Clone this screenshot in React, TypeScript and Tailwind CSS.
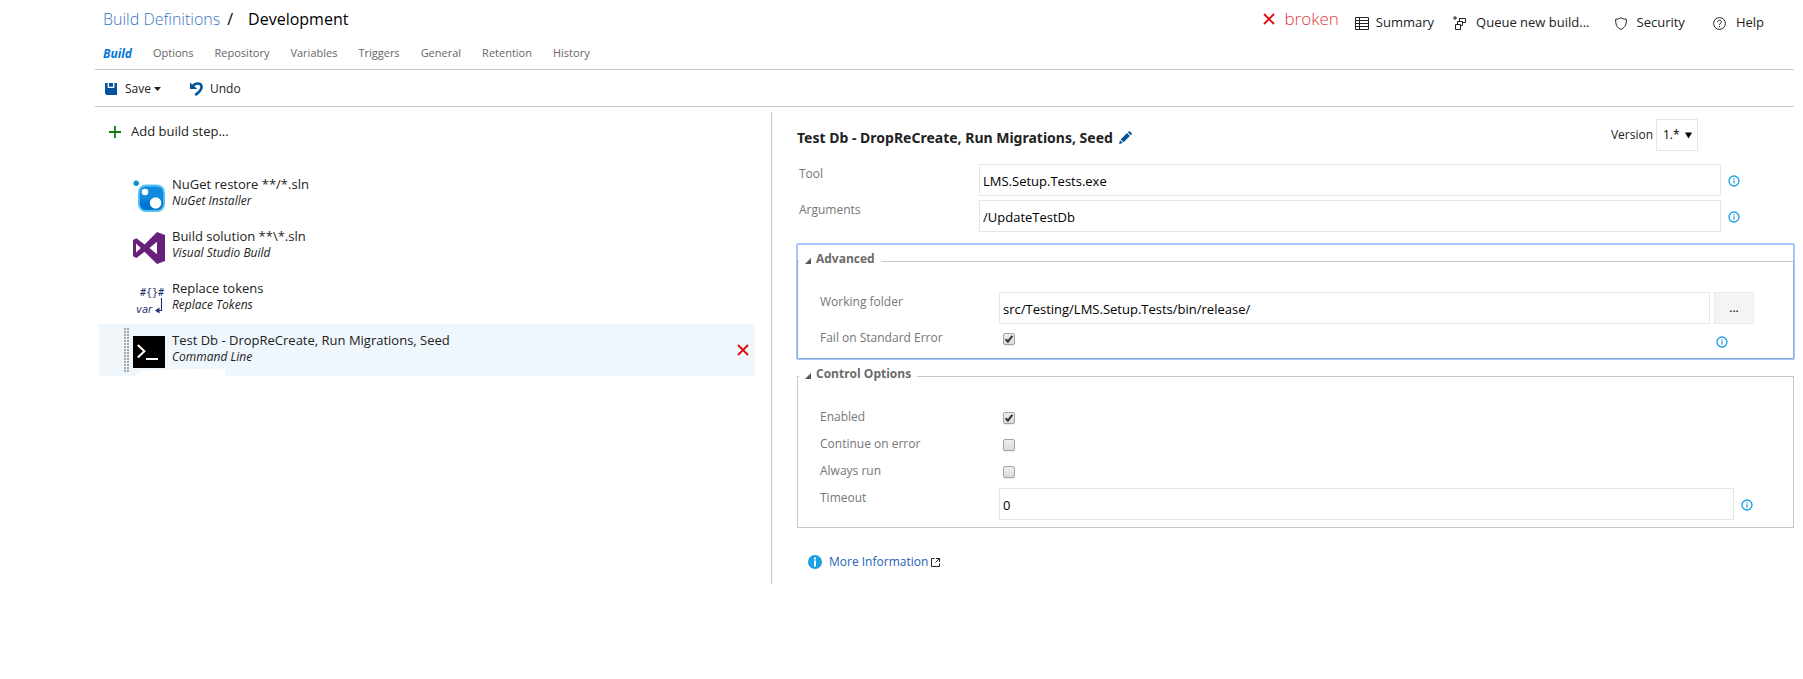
import React, { useState } from "react";

const InfoIcon = () => (
  <svg viewBox="0 0 12 12" className="h-3 w-3 shrink-0" fill="none">
    <circle cx="6" cy="6" r="5" stroke="#1ba1e2" strokeWidth="1.3" />
    <path d="M6 5.3V8.6" stroke="#1ba1e2" strokeWidth="1.2" />
    <path d="M6 3.2V4.4" stroke="#1ba1e2" strokeWidth="1.2" />
  </svg>
);

const CrossIcon = () => (
  <svg viewBox="0 0 12 12" className="h-3 w-3 shrink-0" fill="none" stroke="#e00b0b" strokeWidth="1.9">
    <path d="M1 1L11 11M11 1L1 11" />
  </svg>
);

const NuGetIcon = () => (
  <svg viewBox="0 0 32 32" className="h-8 w-8">
    <defs>
      <linearGradient id="nuget" x1="0" y1="0" x2="0" y2="1">
        <stop offset="0.5" stopColor="#0f8ade" />
        <stop offset="0.75" stopColor="#0072d0" />
      </linearGradient>
    </defs>
    <circle cx="3.2" cy="3.2" r="2.7" fill="#0a94d6" />
    <rect x="5" y="4.5" width="27" height="27.5" rx="8" fill="#56c3ee" />
    <rect x="6.8" y="6.4" width="23.4" height="23.6" rx="6.4" fill="url(#nuget)" />
    <circle cx="12" cy="12" r="3.3" fill="#fff" />
    <circle cx="22.6" cy="23" r="5.8" fill="#fff" />
  </svg>
);

const VisualStudioIcon = () => (
  <svg viewBox="0 0 32 32" className="h-8 w-8" fill="#68217a" fillRule="evenodd">
    <path d="M24 0L32 3V29L24 32L11.6 19.8L3.4 26L0 24.2V8L3.4 6.2L11.6 12.4ZM24 9.8L16.4 16L24 22.2ZM3 11.6V20.6L7.8 16Z" />
  </svg>
);

const TokensIcon = () => (
  <svg viewBox="0 0 32 32" className="h-8 w-8" fill="#1f3270">
    <text x="7" y="12" fontSize="10" fontFamily="DejaVu Sans Mono, monospace">#{"{}"}#</text>
    <text x="3" y="29" fontSize="10" fontStyle="italic" fontFamily="DejaVu Sans, sans-serif">var</text>
    <path d="M28.5 14V26.5H25" fill="none" stroke="#1f3270" strokeWidth="1.1" />
    <path d="M26.5 23.5V29.5L22 26.5Z" />
  </svg>
);

const ConsoleIcon = () => (
  <svg viewBox="0 0 32 32" className="h-8 w-8" fill="none" stroke="#fff">
    <rect width="32" height="32" fill="#000" stroke="none" />
    <path d="M4.8 9L11.4 15.2L4.8 21.4" strokeWidth="2" />
    <path d="M13 23H25" strokeWidth="2" />
  </svg>
);

const tabs = ["Build", "Options", "Repository", "Variables", "Triggers", "General", "Retention", "History"];

const steps = [
  { title: "NuGet restore **/*.sln", task: "NuGet Installer", icon: <NuGetIcon /> },
  { title: "Build solution **\\*.sln", task: "Visual Studio Build", icon: <VisualStudioIcon /> },
  { title: "Replace tokens", task: "Replace Tokens", icon: <TokensIcon /> },
  { title: "Test Db - DropReCreate, Run Migrations, Seed", task: "Command Line", icon: <ConsoleIcon />, selected: true },
];

const inputClass =
  "h-8 min-w-0 flex-1 rounded-none border border-[#e6e6e6] bg-white px-[3px] pt-[2px] text-[13px] text-black outline-none";

function Label({ id, text, width = "w-[179px]" }: { id: string; text: string; width?: string }) {
  return (
    <label htmlFor={id} className={`${width} h-5 shrink-0 self-start text-[12px] leading-5 text-[#767676]`}>
      {text}
    </label>
  );
}

function Checkbox({ id, initial = false }: { id: string; initial?: boolean }) {
  const [checked, setChecked] = useState(initial);
  return (
    <span className="ml-1 grid h-3 w-3 shrink-0">
      <input
        id={id}
        type="checkbox"
        checked={checked}
        onChange={(e) => setChecked(e.target.checked)}
        className="peer col-start-1 row-start-1 h-3 w-3 appearance-none rounded-[2px] border border-[#a3a3a3] bg-linear-to-b from-[#eeeeee] to-[#dcdcdc] shadow-[0_1px_0_#ececec]"
      />
      <svg
        viewBox="0 0 12 12"
        className="pointer-events-none invisible z-10 col-start-1 row-start-1 h-3 w-3 peer-checked:visible"
        fill="none"
        stroke="#3a3a3a"
        strokeWidth="2.2"
      >
        <path d="M2.6 6.2L4.9 8.6L9.3 2.8" />
      </svg>
    </span>
  );
}

function CheckRow({ id, text, initial }: { id: string; text: string; initial?: boolean }) {
  return (
    <div className="flex h-[27px] pl-[22px]">
      <Label id={id} text={text} />
      <div className="pt-[5px]">
        <Checkbox id={id} initial={initial} />
      </div>
    </div>
  );
}

function Legend({ text }: { text: string }) {
  return (
    <legend className="ml-[1px] h-[35px] pr-[6px] pl-[6px]">
      <button type="button" className="flex h-[30px] items-center gap-[5px] text-[12px] font-bold text-[#6b6b6b]">
        <svg viewBox="0 0 6 6" className="mt-[3px] h-[6px] w-[6px]" fill="#555">
          <path d="M6 0V6H0Z" />
        </svg>
        {text}
      </button>
    </legend>
  );
}

function Header() {
  return (
    <header className="flex h-[38px] justify-between">
      <h1 className="flex h-[38px] items-center pl-2 text-[16px] whitespace-nowrap text-black">
        <a href="#definitions" className="font-light text-[#3b74c4]">Build Definitions</a>
        <span className="ml-[7px]">/</span>
        <span className="ml-[15px]">Development</span>
      </h1>
      <nav className="flex h-[38px] items-center pr-[30px] text-[13px] whitespace-nowrap text-[#222]">
        <a href="#status" className="mr-4 flex items-center gap-[10px] text-[17px] font-light text-[#dc3b3b]">
          <CrossIcon />
          broken
        </a>
        <a href="#summary" className="mt-2 mr-[19px] flex items-center gap-[7px]">
          <svg viewBox="0 0 14 13" className="h-[13px] w-[14px]" fill="none" stroke="#222">
            <path d="M.5 .5H13.5V12.5H.5ZM.5 3.5H13.5M.5 6.5H13.5M.5 9.5H13.5M4.5 .5V12.5" />
          </svg>
          Summary
        </a>
        <a href="#queue" className="mt-2 mr-[25px] flex items-center gap-[10px]">
          <svg viewBox="0 0 13 14" className="h-[14px] w-[13px]" fill="none" stroke="#222">
            <path d="M2 0V4M0 2H4M6 2.5H12.5V6.5H9.5M6.5 2V5M4.5 8V5.5H9.5V9.5H7.5M2.5 8.5H7.5V13.5H2.5Z" />
          </svg>
          Queue new build...
        </a>
        <a href="#security" className="mt-2 mr-7 flex items-center gap-[10px]">
          <svg viewBox="0 0 12 13" className="h-[13px] w-3" fill="none" stroke="#222">
            <path d="M6 .6C4.6 1.8 2.6 2.2 .7 2.2C.4 7 1.6 10.5 6 12.4C10.4 10.5 11.6 7 11.3 2.2C9.4 2.2 7.4 1.8 6 .6Z" />
          </svg>
          Security
        </a>
        <a href="#help" className="mt-2 flex items-center gap-[10px]">
          <svg viewBox="0 0 13 13" className="h-[13px] w-[13px]" fill="none" stroke="#222">
            <circle cx="6.5" cy="6.5" r="5.9" />
            <path d="M4.6 5.1C4.6 2.6 8.5 2.7 8.4 5C8.3 6.4 6.5 6.3 6.5 8M6.5 9V10.2" />
          </svg>
          Help
        </a>
      </nav>
    </header>
  );
}

function StepList() {
  return (
    <section className="w-[676px] shrink pr-4 pl-1">
      <button type="button" className="mt-[7px] mb-[23px] flex h-[26px] items-center gap-[10px] pl-[10px] text-[13px] text-[#222]">
        <svg viewBox="0 0 12 12" className="h-3 w-3" stroke="#107c10" strokeWidth="1.8">
          <path d="M6 0V12M0 6H12" />
        </svg>
        Add build step...
      </button>
      <ul>
        {steps.map((s) => (
          <li
            key={s.title}
            className={`relative flex h-[52px] items-center pr-[6px] ${s.selected ? "bg-[#eff6fc]" : ""}`}
          >
            <span className="flex w-[34px] shrink-0 justify-end pr-1">
              {s.selected && (
                <span className="h-[44px] w-[5px] bg-[repeating-linear-gradient(180deg,#a6a6a6_0_2px,transparent_2px_3px)]">
                  <span className="mx-auto block h-full w-px bg-[#eff6fc]" />
                </span>
              )}
            </span>
            <span className="mt-1 mr-[7px] flex shrink-0 items-center">{s.icon}</span>
            <span className="flex h-full min-w-0 flex-1 flex-col pt-[7px]">
              <a href="#step" className="text-[13px] leading-[18px] text-[#222]">{s.title}</a>
              <span className="text-[12px] leading-4 text-[#222] italic">{s.task}</span>
            </span>
            {s.selected && (
              <>
                <button type="button" aria-label="Remove step">
                  <CrossIcon />
                </button>
                <svg viewBox="0 0 90 8" className="absolute bottom-0 left-9 h-2 w-[90px]" fill="#fff">
                  <path d="M0 8L6 2.5L60 1L90 .5V8Z" />
                </svg>
              </>
            )}
          </li>
        ))}
      </ul>
    </section>
  );
}

function StepEditor() {
  return (
    <section className="min-w-0 flex-1 border-l border-[#c8c8c8] pt-[7px] pb-3 pl-[25px]">
      <div className="mb-[13px] flex h-8 items-center justify-between pr-24">
        <h2 className="flex items-center gap-[6px] pt-[5px] font-['Noto_Sans','Open_Sans',sans-serif] text-[14px] font-bold text-[#222]">
          Test Db - DropReCreate, Run Migrations, Seed
          <button type="button" aria-label="Rename step">
            <svg viewBox="0 0 13 13" className="h-[13px] w-[13px]" fill="#00539c">
              <path d="M0 13L1 9.2L3.8 12ZM1.7 8.4L8 2.1L10.9 5L4.6 11.3ZM8.8 1.3L9.7 .4Q10.3 -.1 10.9 .4L12.6 2.1Q13.1 2.7 12.6 3.3L11.7 4.2Z" />
            </svg>
          </button>
        </h2>
        <div className="flex items-center gap-[3px]">
          <label htmlFor="version" className="text-[12px] text-[#222]">Version</label>
          <span className="grid">
            <select
              id="version"
              className="col-start-1 row-start-1 h-8 w-[42px] appearance-none border border-[#e6e6e6] bg-white pl-[6px] text-[12px] text-black"
            >
              <option>1.*</option>
            </select>
            <svg
              viewBox="0 0 7 7"
              className="pointer-events-none z-10 col-start-1 row-start-1 mr-[6px] h-[7px] w-[7px] self-center justify-self-end"
            >
              <path d="M0 .5H7L3.5 6.5Z" />
            </svg>
          </span>
        </div>
      </div>

      <div className="mb-1 flex items-center pr-[54px] pl-[2px]">
        <Label id="tool" text="Tool" width="w-[180px]" />
        <input id="tool" className={inputClass} defaultValue="LMS.Setup.Tests.exe" />
        <button type="button" aria-label="About tool" className="ml-[7px] pt-[2px]"><InfoIcon /></button>
      </div>
      <div className="mb-3 flex items-center pr-[54px] pl-[2px]">
        <Label id="arguments" text="Arguments" width="w-[180px]" />
        <input id="arguments" className={inputClass} defaultValue="/UpdateTestDb" />
        <button type="button" aria-label="About arguments" className="ml-[7px] pt-[2px]"><InfoIcon /></button>
      </div>

      <fieldset className="min-w-0 rounded-[1px] border border-[#c8c8c8] outline-2 -outline-offset-1 outline-[#4d90fe]/50">
        <Legend text="Advanced" />
        <div className="mb-1 flex pt-[13px] pr-[39px] pl-[22px]">
          <Label id="folder" text="Working folder" />
          <input id="folder" className={inputClass} defaultValue="src/Testing/LMS.Setup.Tests/bin/release/" />
          <button type="button" aria-label="Browse" className="ml-1 h-8 w-10 border border-[#eaeaea] bg-[#f4f4f4] text-[12px] text-black">
            ...
          </button>
        </div>
        <div className="mb-1 flex h-[26px] items-center justify-between pr-[65px] pl-[22px]">
          <div className="flex h-full">
            <Label id="fail" text="Fail on Standard Error" />
            <div className="pt-[5px]">
              <Checkbox id="fail" initial />
            </div>
          </div>
          <button type="button" aria-label="About failing on standard error" className="pt-[2px]"><InfoIcon /></button>
        </div>
      </fieldset>

      <fieldset className="min-w-0 border border-[#c8c8c8]">
        <Legend text="Control Options" />
        <div className="pt-[13px]">
          <CheckRow id="enabled" text="Enabled" initial />
          <CheckRow id="continue" text="Continue on error" />
          <CheckRow id="always" text="Always run" />
        </div>
        <div className="mb-[7px] flex items-center pr-10 pl-[22px]">
          <Label id="timeout" text="Timeout" />
          <input id="timeout" className={inputClass} defaultValue="0" />
          <button type="button" aria-label="About timeout" className="ml-[7px] pt-[2px]"><InfoIcon /></button>
        </div>
      </fieldset>

      <a href="#more" className="mt-6 flex h-5 items-center pl-[11px] text-[12px] text-[#1f62b8]">
        <svg viewBox="0 0 14 14" className="mr-[7px] h-[14px] w-[14px]">
          <circle cx="7" cy="7" r="7" fill="#1ba1e2" />
          <path d="M6 5.5H8V11.5H6ZM6 2.5H8V4.5H6Z" fill="#fff" />
        </svg>
        More Information
        <svg viewBox="0 0 9 9" className="ml-[3px] h-[9px] w-[9px]" fill="none" stroke="#222">
          <path d="M3.5 .5H.5V8.5H8.5V5.5M5 .5H8.5V4M8.5 .5L4.5 4.5" />
        </svg>
      </a>
    </section>
  );
}

export default function App() {
  return (
    <div className="min-h-screen bg-white pr-[9px] pl-[95px] font-['Open_Sans','Noto_Sans',sans-serif]">
      <Header />
      <nav className="flex h-8 items-center gap-[21px] border-b border-[#c8c8c8] pl-2 text-[#666]">
        {tabs.map((t, i) => (
          <a key={t} href={`#${t}`} className={i === 0 ? "text-[12px] font-bold text-[#0078d7] italic" : "text-[11px]"}>
            {t}
          </a>
        ))}
      </nav>
      <div className="flex h-[37px] items-center border-b border-[#c8c8c8] pt-[2px] pl-[10px] text-[12px] text-[#222]">
        <button type="button" className="flex items-center">
          <svg viewBox="0 0 12 12" className="mr-2 h-3 w-3" fill="#00539c">
            <path d="M0 0H2.6V5H9.4V0H12V12H1.5L0 10.5ZM5 0H6.6V3H5ZM6.6 0H8V3.8H4V0H5V3H6.6Z" />
          </svg>
          Save
          <svg viewBox="0 0 7 4" className="ml-[3px] h-1 w-[7px]" fill="#222">
            <path d="M0 0H7L3.5 4Z" />
          </svg>
        </button>
        <button type="button" className="ml-[29px] flex items-center gap-[7px]">
          <svg viewBox="0 0 13 14" className="h-[14px] w-[13px]" fill="none" stroke="#00539c" strokeWidth="2.6">
            <path d="M2.4 4.2C5.5 .8 10.3 .6 11.4 3.8C12.4 7.4 9 10.4 5.2 13" />
            <path d="M0 .6V7H7.2L5 4.8L2.8 3.2Z" fill="#00539c" stroke="none" />
          </svg>
          Undo
        </button>
      </div>
      <main className="mt-[5px] flex">
        <StepList />
        <StepEditor />
      </main>
    </div>
  );
}
